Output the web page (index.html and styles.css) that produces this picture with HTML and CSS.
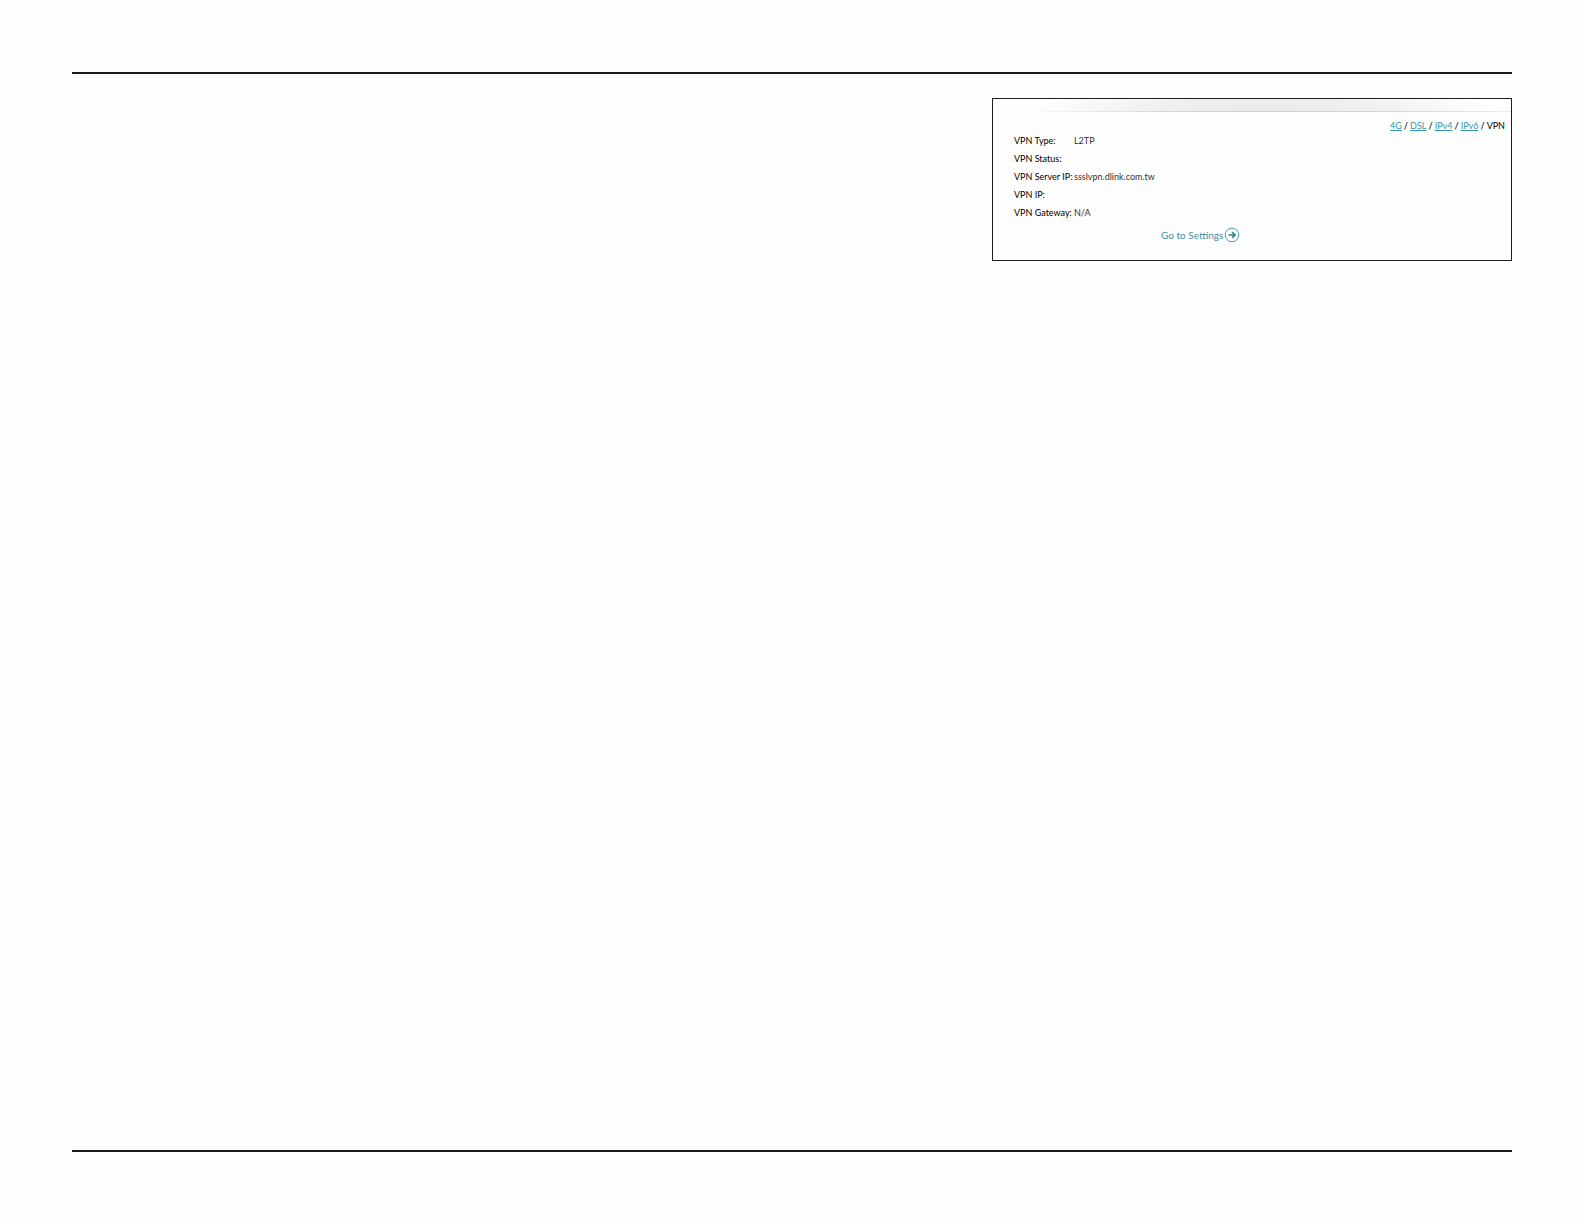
FILE: index.html
```html
<!DOCTYPE html>
<html lang="en">
<head>
  <meta charset="utf-8">
  <meta name="viewport" content="width=device-width, initial-scale=1">
  <title>VPN</title>
  <link rel="stylesheet" href="styles.css">
</head>
<body>
  <div class="page">
    <main class="content">
      <section class="panel">
        <div class="panel-shade"></div>
        <nav class="tabs">
          <a href="#4g">4G</a><b>/</b><a href="#dsl">DSL</a><b>/</b><a href="#ipv4">IPv4</a><b>/</b><a href="#ipv6">IPv6</a><b>/</b><span class="current">VPN</span>
        </nav>
        <dl class="details">
          <dt>VPN Type:</dt><dd>L2TP</dd>
          <dt>VPN Status:</dt><dd></dd>
          <dt>VPN Server IP:</dt><dd>ssslvpn.dlink.com.tw</dd>
          <dt>VPN IP:</dt><dd></dd>
          <dt>VPN Gateway:</dt><dd>N/A</dd>
        </dl>
        <a class="settings" href="#settings">
          <span>Go to Settings</span>
          <svg class="settings-icon" viewBox="0 0 16 16" aria-hidden="true">
            <circle cx="8" cy="8" r="6.8" fill="none" stroke="#4a9aa8" stroke-width="1"/>
            <path d="M4.5 8H11M8.2 5.2L11 8L8.2 10.8" fill="none" stroke="#2b8797" stroke-width="1.7"/>
          </svg>
        </a>
      </section>
    </main>
  </div>
</body>
</html>
```
FILE: styles.css
```css
* {
  box-sizing: border-box;
}

body {
  margin: 0;
  background: #fefefe;
  color: #1c1c1c;
  font-family: Lato, "Liberation Sans", sans-serif;
}

.page {
  display: flex;
  min-height: 100vh;
  padding: 72px;
}

.content {
  flex: 1;
  padding-top: 24px;
  border-top: 2px solid #1c1c1e;
  border-bottom: 2px solid #1c1c1e;
}

.panel {
  max-width: 520px;
  margin-left: auto;
  padding-bottom: 17px;
  border: 1px solid #1c1c1e;
}

.panel-shade {
  height: 13px;
  margin-left: 24px;
  border-style: solid;
  border-width: 0 0 1px;
  border-image: linear-gradient(to right, transparent, #d2d2d2 35%, #d2d2d2 70%, #ececec) 1;
  background: radial-gradient(ellipse 46% 250% at 50% 100%, #e9e9e9, #f0f0f0 50%, transparent);
}

.tabs {
  display: flex;
  justify-content: flex-end;
  gap: 2px;
  padding: 8px 6px 0 0;
  font-size: 9px;
  line-height: 12px;
}

.tabs a {
  color: #3496a4;
}

.current {
  color: #000;
}

.details {
  display: grid;
  grid-template-columns: 60px 1fr;
  grid-auto-rows: 18px;
  margin: 0 0 0 21px;
  color: #000;
  font-size: 9px;
  line-height: 18px;
  white-space: nowrap;
}

.details dd {
  margin: 0;
  color: #303030;
}

.settings {
  display: flex;
  align-items: center;
  gap: 1px;
  width: max-content;
  margin-top: 5px;
  margin-left: 168px;
  color: #3f8f9d;
  font-size: 10px;
  line-height: 16px;
  text-decoration: none;
}

.settings-icon {
  width: 16px;
  height: 16px;
}
```
